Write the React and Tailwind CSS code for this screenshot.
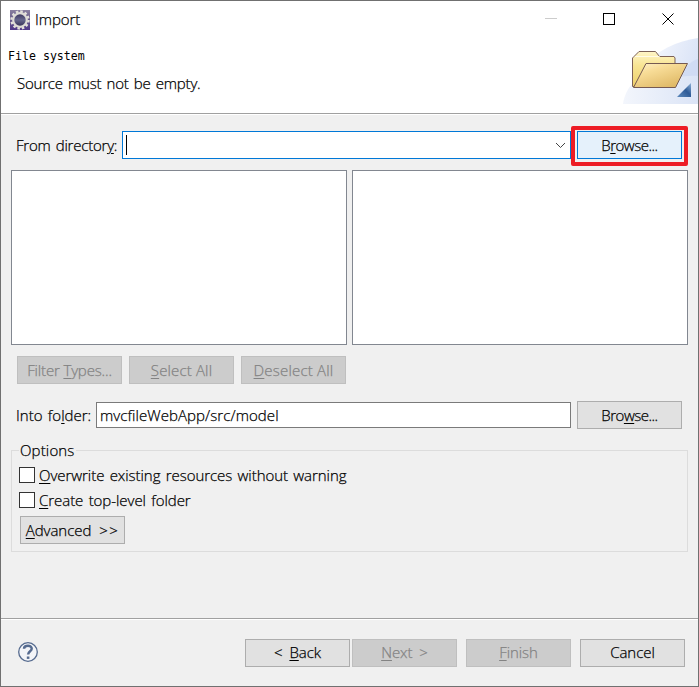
import React from 'react';

const Key = ({ children }) => (
  <span className="underline decoration-1 underline-offset-2">{children}</span>
);

const Button = ({ variant = 'normal', className = '', children }) => {
  const variantMap = {
    normal: 'bg-[#e1e1e1] border-[#adadad] text-black',
    hover: 'bg-[#e5f1fb] border-[#0078d7] text-black',
    disabled: 'bg-[#cccccc] border-[#bfbfbf] text-[#838383]',
  };
  return (
    <button
      className={`flex h-7 w-[105px] shrink-0 items-center justify-center whitespace-pre border pb-px ${variantMap[variant]} ${className}`}
    >
      <span>{children}</span>
    </button>
  );
};

const CheckRow = ({ children }) => (
  <label className="flex h-[25px] items-center gap-1">
    <span className="h-4 w-4 border border-[#333333] bg-white"></span>
    <span className="whitespace-pre">{children}</span>
  </label>
);

const EclipseIcon = () => (
  <svg className="h-5 w-5" viewBox="0 0 20 20">
    <defs>
      <linearGradient id="iconBg" x1="0" y1="0" x2="0" y2="1">
        <stop offset="0" stopColor="#8a80a0" />
        <stop offset="0.5" stopColor="#665889" />
        <stop offset="1" stopColor="#51388a" />
      </linearGradient>
      <linearGradient id="iconCore" x1="0" y1="0" x2="0" y2="1">
        <stop offset="0" stopColor="#37305a" />
        <stop offset="0.5" stopColor="#66668c" />
        <stop offset="1" stopColor="#302a50" />
      </linearGradient>
    </defs>
    <rect width="20" height="20" fill="url(#iconBg)" />
    <circle cx="10" cy="10" r="8.5" fill="none" stroke="#e4e1dc" strokeWidth="2.4" strokeDasharray="2.5 1.95" />
    <circle cx="10" cy="10" r="6.8" fill="url(#iconCore)" stroke="#dedbd6" strokeWidth="2.2" />
  </svg>
);

const FolderBanner = () => (
  <svg className="h-[66px] w-[75px]" viewBox="0 0 75 66">
    <defs>
      <linearGradient id="swoosh" x1="0" y1="0" x2="1" y2="0.3">
        <stop offset="0" stopColor="#fafbfe" />
        <stop offset="1" stopColor="#dbe4f7" />
      </linearGradient>
      <linearGradient id="swooshLow" x1="0" y1="0" x2="1" y2="0">
        <stop offset="0" stopColor="#f3f6fc" />
        <stop offset="1" stopColor="#dbe4f6" />
      </linearGradient>
      <linearGradient id="folderBack" x1="0" y1="0" x2="0" y2="1">
        <stop offset="0" stopColor="#fff6c8" />
        <stop offset="0.4" stopColor="#f8e493" />
        <stop offset="1" stopColor="#eed06a" />
      </linearGradient>
      <linearGradient id="folderFront" x1="0" y1="0" x2="0.7" y2="1">
        <stop offset="0" stopColor="#fff3cf" />
        <stop offset="0.35" stopColor="#f8dd98" />
        <stop offset="1" stopColor="#dfb865" />
      </linearGradient>
      <linearGradient id="corner" x1="0" y1="1" x2="1" y2="0">
        <stop offset="0" stopColor="#5f8bbd" />
        <stop offset="0.55" stopColor="#2f5b97" />
        <stop offset="1" stopColor="#8fb2d8" />
      </linearGradient>
    </defs>
    <path d="M75 0C54 3 34 12 21 28V50H75Z" fill="url(#swoosh)" />
    <path d="M75 21C66 24 58 32 52 45H75Z" fill="#c8d6f2" opacity="0.6" />
    <path d="M0 66C3 48 16 34 36 38C52 41 62 37 75 38V66Z" fill="url(#swooshLow)" />
    <path
      d="M9.5 48.5V20L11 18.5L16 13.5H32.5L36.5 18.5H51L52 20V48.5Z"
      fill="url(#folderBack)"
      stroke="#7d6258"
      strokeLinejoin="round"
    />
    <path d="M12 18.5H36.5" stroke="#fffbe6" />
    <path d="M10.5 49.5L23 25.5H64.5L52.5 49.5Z" fill="url(#folderFront)" stroke="#755a52" strokeLinejoin="round" />
    <path d="M54 59H68V45Z" fill="url(#corner)" />
  </svg>
);

const HelpIcon = () => (
  <svg className="h-5 w-5" viewBox="0 0 20 20" fill="none" stroke="#566b8f">
    <circle cx="10" cy="10" r="9.3" fill="#f4f5f8" strokeWidth="1.3" />
    <path d="M6 6.8C6.2 2.8 13.9 2.9 13.7 6.8C13.6 9.3 10.1 9.2 10.1 12.6" strokeWidth="2.5" />
    <path d="M8.8 15.7H11.4" strokeWidth="2.4" />
  </svg>
);

const edgeMarks = [
  { top: 78, height: 5, color: '#1c0f6e' },
  { top: 194, height: 2, color: '#1c0f6e' },
  { top: 217, height: 1, color: '#1c0f4e' },
  { top: 316, height: 23, color: '#17548c' },
  { top: 347, height: 10, color: '#6c2f68' },
  { top: 413, height: 13, color: '#3c7f96' },
  { top: 457, height: 15, color: '#5e1254' },
  { top: 652, height: 1, color: '#1c0f6e' },
];

const App = () => {
  return (
    <div className="relative flex h-[687px] w-[699px] flex-col overflow-hidden border border-[#707070] bg-[#f0f0f0] font-['Open_Sans','Noto_Sans',sans-serif] text-[15px] font-light leading-5 tracking-[-0.05px] text-black [-webkit-text-stroke:0.25px] [word-spacing:1.5px]">
      {/* Header */}
      <div className="flex h-[114px] shrink-0 border-b border-white bg-white">
        <div className="flex flex-1 flex-col border-b border-[#a0a0a0]">
          <div className="flex h-9 items-center gap-[5px] pl-[9px] pt-px">
            <EclipseIcon />
            <span className="-mt-0.5">Import</span>
          </div>
          <p className="mt-[11px] pl-[7px] font-['DejaVu_Sans_Mono',monospace] text-[11.6px] font-normal leading-4 tracking-normal [-webkit-text-stroke:0px] [word-spacing:0px]">
            File system
          </p>
          <p className="mt-[9px] pl-4 tracking-[-0.2px]">Source must not be empty.</p>
        </div>
        <div className="flex w-[160px] flex-col items-end border-b border-[#a0a0a0]">
          <svg className="h-[37px] w-[160px] shrink-0" viewBox="0 0 160 37" fill="none" shapeRendering="crispEdges">
            <path d="M7 17.5H19" stroke="#cccccc" />
            <rect x="65.5" y="12.5" width="11" height="11" stroke="#000000" />
            <path d="M124.5 12.5L135.5 23.5M135.5 12.5L124.5 23.5" stroke="#000000" shapeRendering="auto" />
          </svg>
          <FolderBanner />
        </div>
      </div>

      {/* Source directory */}
      <div className="mt-[11px] flex h-10 shrink-0 items-center pl-[15px]">
        <span className="-mt-0.5 w-[106px] whitespace-pre tracking-[-0.22px]">
          From director<Key>y</Key>:
        </span>
        <div className="-mt-0.5 flex h-7 w-[449px] items-center justify-between border border-[#0078d7] bg-white pl-[3px] pr-1">
          <span className="h-5 w-px bg-black"></span>
          <svg className="h-[7px] w-[11px]" viewBox="0 0 11 7" fill="none" stroke="#444444">
            <path d="M1 1L5.5 5.5L10 1" />
          </svg>
        </div>
        <div className="flex h-10 w-[117px] items-start justify-center rounded-[2px] border-4 border-[#ed1c24] pt-px">
          <Button variant="hover" className="tracking-[-0.5px]">
            B<Key>r</Key>owse...
          </Button>
        </div>
      </div>

      <div className="mt-1 flex h-[175px] shrink-0 gap-[5px] pl-2.5">
        <div className="w-[336px] border border-[#828790] bg-white"></div>
        <div className="w-[336px] border border-[#828790] bg-white"></div>
      </div>

      <div className="mt-[11px] flex shrink-0 gap-[7px] pl-4">
        <Button variant="disabled" className="tracking-[-0.15px]">
          Filter <Key>T</Key>ypes...
        </Button>
        <Button variant="disabled" className="tracking-[0.15px]">
          <Key>S</Key>elect All
        </Button>
        <Button variant="disabled" className="tracking-[0.2px]">
          <Key>D</Key>eselect All
        </Button>
      </div>

      {/* Target folder */}
      <div className="mt-[17px] flex h-7 shrink-0 items-center pl-[15px]">
        <span className="w-20 whitespace-pre tracking-[0px]">
          Into fo<Key>l</Key>der:
        </span>
        <div className="mr-1.5 flex h-[26px] w-[475px] items-center border border-[#7a7a7a] bg-white pl-[3px] tracking-[0.07px]">
          mvcfileWebApp/src/model
        </div>
        <Button className="tracking-[-0.5px]">
          Bro<Key>w</Key>se...
        </Button>
      </div>

      <fieldset className="ml-2.5 mt-[11px] h-28 w-[677px] shrink-0 border border-[#dcdcdc] pl-[7px]">
        <legend className="px-px leading-5 tracking-[0.15px]">Options</legend>
        <div className="mt-0.5">
          <CheckRow>
            <Key>O</Key>verwrite existing resources without warning
          </CheckRow>
          <CheckRow>
            <Key>C</Key>reate top-level folder
          </CheckRow>
        </div>
        <Button className="ml-px mt-1 [word-spacing:4px]">
          <Key>A</Key>dvanced <span className="tracking-[1.5px]">&gt;&gt;</span>
        </Button>
      </fieldset>

      {/* Footer */}
      <div className="mt-auto flex h-[68px] shrink-0 items-center border-t border-[#a0a0a0] pl-[17px] shadow-[inset_0_1px_0_#ffffff]">
        <div className="-mt-0.5">
          <HelpIcon />
        </div>
        <div className="ml-[207px] flex">
          <Button className="[word-spacing:3px]">
            &lt; <Key>B</Key>ack
          </Button>
          <Button variant="disabled" className="ml-0.5 [word-spacing:3px]">
            <Key>N</Key>ext &gt;
          </Button>
          <Button variant="disabled" className="ml-[9px]">
            <Key>F</Key>inish
          </Button>
          <Button className="ml-[9px]">Cancel</Button>
        </div>
      </div>

      {/* Slivers of the editor showing along the window's left edge */}
      {edgeMarks.map(mark => (
        <span
          key={mark.top}
          className="absolute -left-px w-px"
          style={{ top: mark.top - 1, height: mark.height, backgroundColor: mark.color }}
        ></span>
      ))}
    </div>
  );
};

export default App;
